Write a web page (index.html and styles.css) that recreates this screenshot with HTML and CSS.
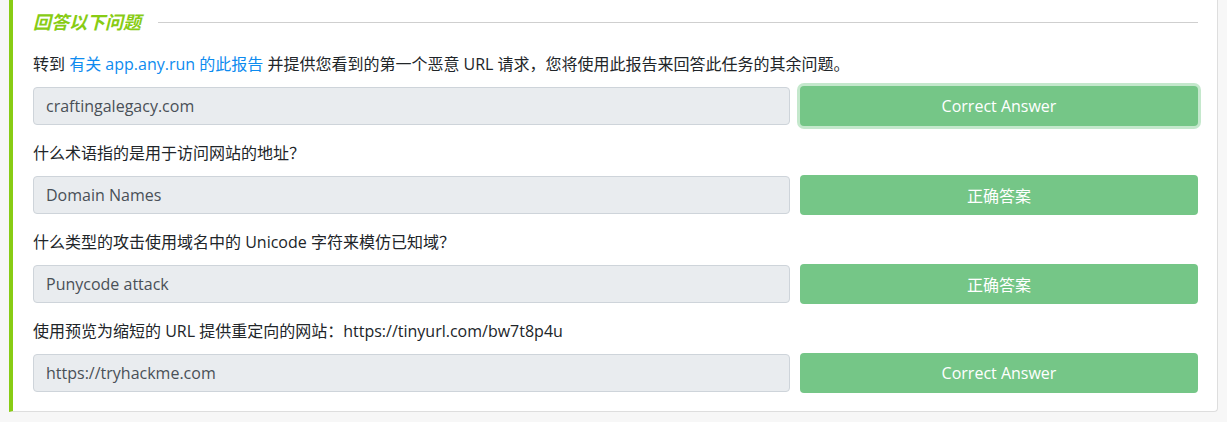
FILE: index.html
```html
<!DOCTYPE html>
<html lang="zh-CN">
<head>
<meta charset="utf-8">
<title>回答以下问题</title>
<link rel="stylesheet" href="styles.css">
</head>
<body>
<div class="page">
  <section class="card">
    <div class="heading">
      <h3 class="heading-title">回答以下问题</h3>
      <span class="heading-rule"></span>
    </div>
    <div class="questions">
      <div class="question">
        <p class="question-text">转到 <a class="link" href="#">有关 app.any.run 的此报告</a> 并提供您看到的第一个恶意 URL 请求，您将使用此报告来回答此任务的其余问题。</p>
        <div class="answer-row">
          <div class="answer-input">craftingalegacy.com</div>
          <button class="answer-btn is-focused" type="button">Correct Answer</button>
        </div>
      </div>
      <div class="question">
        <p class="question-text">什么术语指的是用于访问网站的地址？</p>
        <div class="answer-row">
          <div class="answer-input">Domain Names</div>
          <button class="answer-btn" type="button">正确答案</button>
        </div>
      </div>
      <div class="question">
        <p class="question-text">什么类型的攻击使用域名中的 Unicode 字符来模仿已知域？</p>
        <div class="answer-row">
          <div class="answer-input">Punycode attack</div>
          <button class="answer-btn" type="button">正确答案</button>
        </div>
      </div>
      <div class="question">
        <p class="question-text">使用预览为缩短的 URL 提供重定向的网站：https://tinyurl.com/bw7t8p4u</p>
        <div class="answer-row">
          <div class="answer-input">https://tryhackme.com</div>
          <button class="answer-btn" type="button">Correct Answer</button>
        </div>
      </div>
    </div>
  </section>
</div>
</body>
</html>
```

FILE: styles.css
```css
* { box-sizing: border-box; }
html, body {
  margin: 0;
  padding: 0;
  background: #f7f7f7;
}
body {
  font-family: "Open Sans", "Noto Sans CJK SC", sans-serif;
  color: #212529;
  font-size: 16px;
}
.page {
  padding: 0 9px 10px 9px;
}
.card {
  background: #fff;
  border: 1px solid #dedede;
  border-top: 0;
  border-left: 4px solid #88cc14;
  border-radius: 0 0 4px 0;
  padding: 10px 19px 18px 20px;
}
.heading {
  display: flex;
  align-items: center;
  gap: 17px;
  height: 24px;
  margin-bottom: 18px;
}
.heading-title {
  margin: 0;
  font-size: 18px;
  font-style: italic;
  font-weight: 700;
  color: #88cc14;
  line-height: 24px;
  white-space: nowrap;
}
.heading-rule {
  flex: 1;
  height: 1px;
  background: #cfcfcf;
}
.questions {
  display: flex;
  flex-direction: column;
  gap: 15px;
}
.question-text {
  margin: 0 0 10px 0;
  height: 24px;
  line-height: 24px;
  font-size: 16px;
  white-space: nowrap;
}
.link {
  color: #0d8bef;
  text-decoration: none;
}
.answer-row {
  display: grid;
  grid-template-columns: 1fr 398px;
  gap: 10px;
  align-items: center;
  height: 40px;
}
.answer-input {
  height: 38px;
  line-height: 36px;
  padding: 0 12px;
  background: #e9ecef;
  border: 1px solid #ced4da;
  border-radius: 4px;
  color: #495057;
  font-size: 16px;
}
.answer-btn {
  height: 40px;
  border: 0;
  border-radius: 4px;
  background: #75c687;
  color: #fff;
  font-family: inherit;
  font-size: 16px;
  cursor: pointer;
}
.answer-btn.is-focused {
  box-shadow: 0 0 0 3px #c4e8cc;
}
```
